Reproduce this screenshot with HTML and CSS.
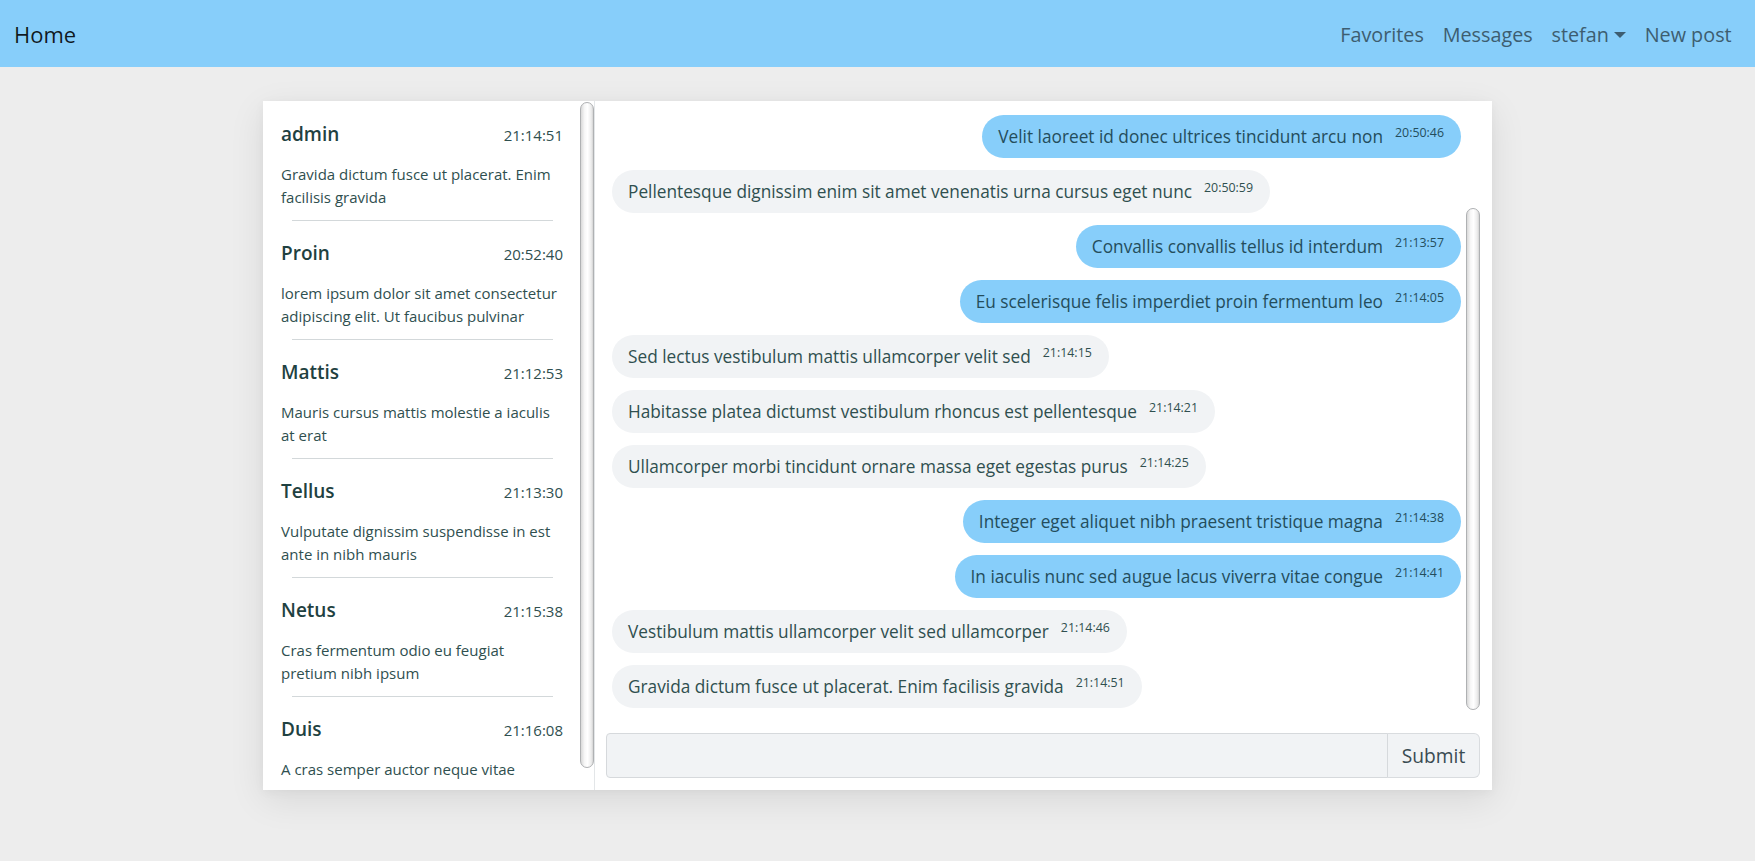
FILE: index.html
```html
<!DOCTYPE html>
<html lang="en">
<head>
<meta charset="utf-8">
<title>Messages</title>
<link rel="stylesheet" href="styles.css">
</head>
<body>
<nav class="navbar">
  <a class="brand" href="#">Home</a>
  <ul class="nav-links">
    <li><a href="#">Favorites</a></li>
    <li><a href="#">Messages</a></li>
    <li><a href="#" class="dropdown">stefan</a></li>
    <li><a href="#">New post</a></li>
  </ul>
</nav>

<main class="page">
  <section class="card">
    <aside class="contacts">
      <div class="contact-list">
        <div class="contact">
          <div class="contact-head"><span class="contact-name">admin</span><span class="contact-time">21:14:51</span></div>
          <p class="contact-preview">Gravida dictum fusce ut placerat. Enim facilisis gravida</p>
          <hr class="divider">
        </div>
        <div class="contact">
          <div class="contact-head"><span class="contact-name">Proin</span><span class="contact-time">20:52:40</span></div>
          <p class="contact-preview">lorem ipsum dolor sit amet consectetur adipiscing elit. Ut faucibus pulvinar</p>
          <hr class="divider">
        </div>
        <div class="contact">
          <div class="contact-head"><span class="contact-name">Mattis</span><span class="contact-time">21:12:53</span></div>
          <p class="contact-preview">Mauris cursus mattis molestie a iaculis at erat</p>
          <hr class="divider">
        </div>
        <div class="contact">
          <div class="contact-head"><span class="contact-name">Tellus</span><span class="contact-time">21:13:30</span></div>
          <p class="contact-preview">Vulputate dignissim suspendisse in est ante in nibh mauris</p>
          <hr class="divider">
        </div>
        <div class="contact">
          <div class="contact-head"><span class="contact-name">Netus</span><span class="contact-time">21:15:38</span></div>
          <p class="contact-preview">Cras fermentum odio eu feugiat pretium nibh ipsum</p>
          <hr class="divider">
        </div>
        <div class="contact">
          <div class="contact-head"><span class="contact-name">Duis</span><span class="contact-time">21:16:08</span></div>
          <p class="contact-preview">A cras semper auctor neque vitae</p>
          <hr class="divider">
        </div>
      </div>
      <div class="scroll-thumb contacts-thumb"></div>
    </aside>

    <div class="chat">
      <div class="messages">
        <div class="msg mine"><div class="bubble">Velit laoreet id donec ultrices tincidunt arcu non<sup class="stamp">20:50:46</sup></div></div>
        <div class="msg theirs"><div class="bubble">Pellentesque dignissim enim sit amet venenatis urna cursus eget nunc<sup class="stamp">20:50:59</sup></div></div>
        <div class="msg mine"><div class="bubble">Convallis convallis tellus id interdum<sup class="stamp">21:13:57</sup></div></div>
        <div class="msg mine"><div class="bubble">Eu scelerisque felis imperdiet proin fermentum leo<sup class="stamp">21:14:05</sup></div></div>
        <div class="msg theirs"><div class="bubble">Sed lectus vestibulum mattis ullamcorper velit sed<sup class="stamp">21:14:15</sup></div></div>
        <div class="msg theirs"><div class="bubble">Habitasse platea dictumst vestibulum rhoncus est pellentesque<sup class="stamp">21:14:21</sup></div></div>
        <div class="msg theirs"><div class="bubble">Ullamcorper morbi tincidunt ornare massa eget egestas purus<sup class="stamp">21:14:25</sup></div></div>
        <div class="msg mine"><div class="bubble">Integer eget aliquet nibh praesent tristique magna<sup class="stamp">21:14:38</sup></div></div>
        <div class="msg mine"><div class="bubble">In iaculis nunc sed augue lacus viverra vitae congue<sup class="stamp">21:14:41</sup></div></div>
        <div class="msg theirs"><div class="bubble">Vestibulum mattis ullamcorper velit sed ullamcorper<sup class="stamp">21:14:46</sup></div></div>
        <div class="msg theirs"><div class="bubble">Gravida dictum fusce ut placerat. Enim facilisis gravida<sup class="stamp">21:14:51</sup></div></div>
        <div class="scroll-thumb messages-thumb"></div>
      </div>
      <form class="composer">
        <input class="composer-input" type="text" aria-label="Message">
        <button class="composer-btn" type="button">Submit</button>
      </form>
    </div>
  </section>
</main>
</body>
</html>
```

FILE: styles.css
```css
* {
  box-sizing: border-box;
}

html, body {
  margin: 0;
  padding: 0;
}

body {
  background: #ededed;
  font-family: "Open Sans", "Noto Sans", "Liberation Sans", sans-serif;
  color: #2f4f4f;
  height: 861px;
  overflow: hidden;
}

a {
  text-decoration: none;
}

/* ---------- navbar ---------- */
.navbar {
  height: 67px;
  background: #87cefa;
  display: flex;
  align-items: center;
  justify-content: space-between;
  padding: 0 14px 0 14px;
}

.brand {
  font-size: 22px;
  font-weight: 500;
  color: rgba(0, 0, 0, 0.88);
  line-height: 30px;
}

.nav-links {
  list-style: none;
  display: flex;
  margin: 0;
  padding: 0;
  transform: translateY(1px);
}

.nav-links a {
  display: block;
  font-size: 19.8px;
  line-height: 28px;
  padding: 0 9.4px;
  color: #3d5d70;
}

.dropdown::after {
  content: "";
  display: inline-block;
  margin-left: 5px;
  vertical-align: 4px;
  border-top: 6px solid #3d5d70;
  border-left: 6px solid transparent;
  border-right: 6px solid transparent;
}

/* ---------- layout ---------- */
.page {
  display: flex;
  justify-content: center;
  padding-top: 34px;
}

.card {
  width: 1229px;
  height: 689px;
  background: #ffffff;
  display: flex;
  box-shadow: 0 10px 34px rgba(0, 0, 0, 0.09), 0 2px 10px rgba(0, 0, 0, 0.04);
}

/* ---------- contacts ---------- */
.contacts {
  position: relative;
  width: 332px;
  flex: none;
  border-right: 1px solid #e3e6e8;
  overflow: hidden;
}

.contact {
  padding: 18px 30px 0 18px;
}

.contact:first-child {
  padding-top: 19px;
}

.contact-head {
  display: flex;
  justify-content: space-between;
  align-items: baseline;
  line-height: 28px;
}

.contact-name {
  font-size: 19px;
  font-weight: 600;
  color: #1f4141;
}

.contact-time {
  font-size: 15px;
  color: #2f4f4f;
  margin-right: 1px;
}

.contact-preview {
  margin: 14px 3px 0 0;
  font-size: 15px;
  line-height: 22.5px;
  color: #2f4f4f;
}

.divider {
  margin: 12px 11px 0;
  border: 0;
  border-top: 1px solid #d3d8da;
  height: 0;
}

/* ---------- fake scrollbar thumbs (overlay) ---------- */
.scroll-thumb {
  position: absolute;
  right: 0;
  width: 14px;
  border: 1px solid #afb1b3;
  border-radius: 7px;
  background: linear-gradient(90deg, #d9d9d9 0%, #f7f7f7 30%, #ffffff 55%, #ececec 85%, #d4d4d4 100%);
}

.contacts-thumb {
  top: 1px;
  height: 666px;
}

.messages-thumb {
  top: 107px;
  bottom: 2px;
}

/* ---------- chat ---------- */
.chat {
  flex: 1;
  display: flex;
  flex-direction: column;
  padding: 0 12px 12px 11px;
  min-width: 0;
}

.messages {
  position: relative;
  flex: 1;
  overflow: hidden;
  padding: 14px 19px 0 6px;
}

.msg {
  display: flex;
  margin-bottom: 12.5px;
}

.msg.mine {
  justify-content: flex-end;
}

.msg.theirs {
  justify-content: flex-start;
}

.bubble {
  font-size: 17.25px;
  line-height: 25.5px;
  padding: 8.5px 17px 8.5px 16px;
  border-radius: 22px;
  white-space: nowrap;
  color: #2f4f4f;
}

.mine .bubble {
  background: #87cefa;
  color: #244d5c;
}

.theirs .bubble {
  background: #f1f3f5;
}

.stamp {
  font-size: 12.4px;
  line-height: 0;
  margin-left: 12px;
  vertical-align: 6px;
}

/* ---------- composer ---------- */
.composer {
  display: flex;
  margin: 21px 0 0;
  height: 45px;
}

.composer-input {
  flex: 1;
  min-width: 0;
  height: 45px;
  background: #f1f3f5;
  border: 1px solid #d6d9dc;
  border-radius: 4px 0 0 4px;
  font-family: inherit;
  font-size: 17px;
  padding: 0 12px;
  outline: none;
}

.composer-btn {
  width: 93px;
  height: 45px;
  background: #f1f3f5;
  border: 1px solid #d9dcdf;
  border-left-color: #d6d9dc;
  margin-left: -1px;
  border-radius: 0 6px 6px 0;
  font-family: inherit;
  font-size: 19.2px;
  color: #3a4b52;
  padding: 0;
}
```
